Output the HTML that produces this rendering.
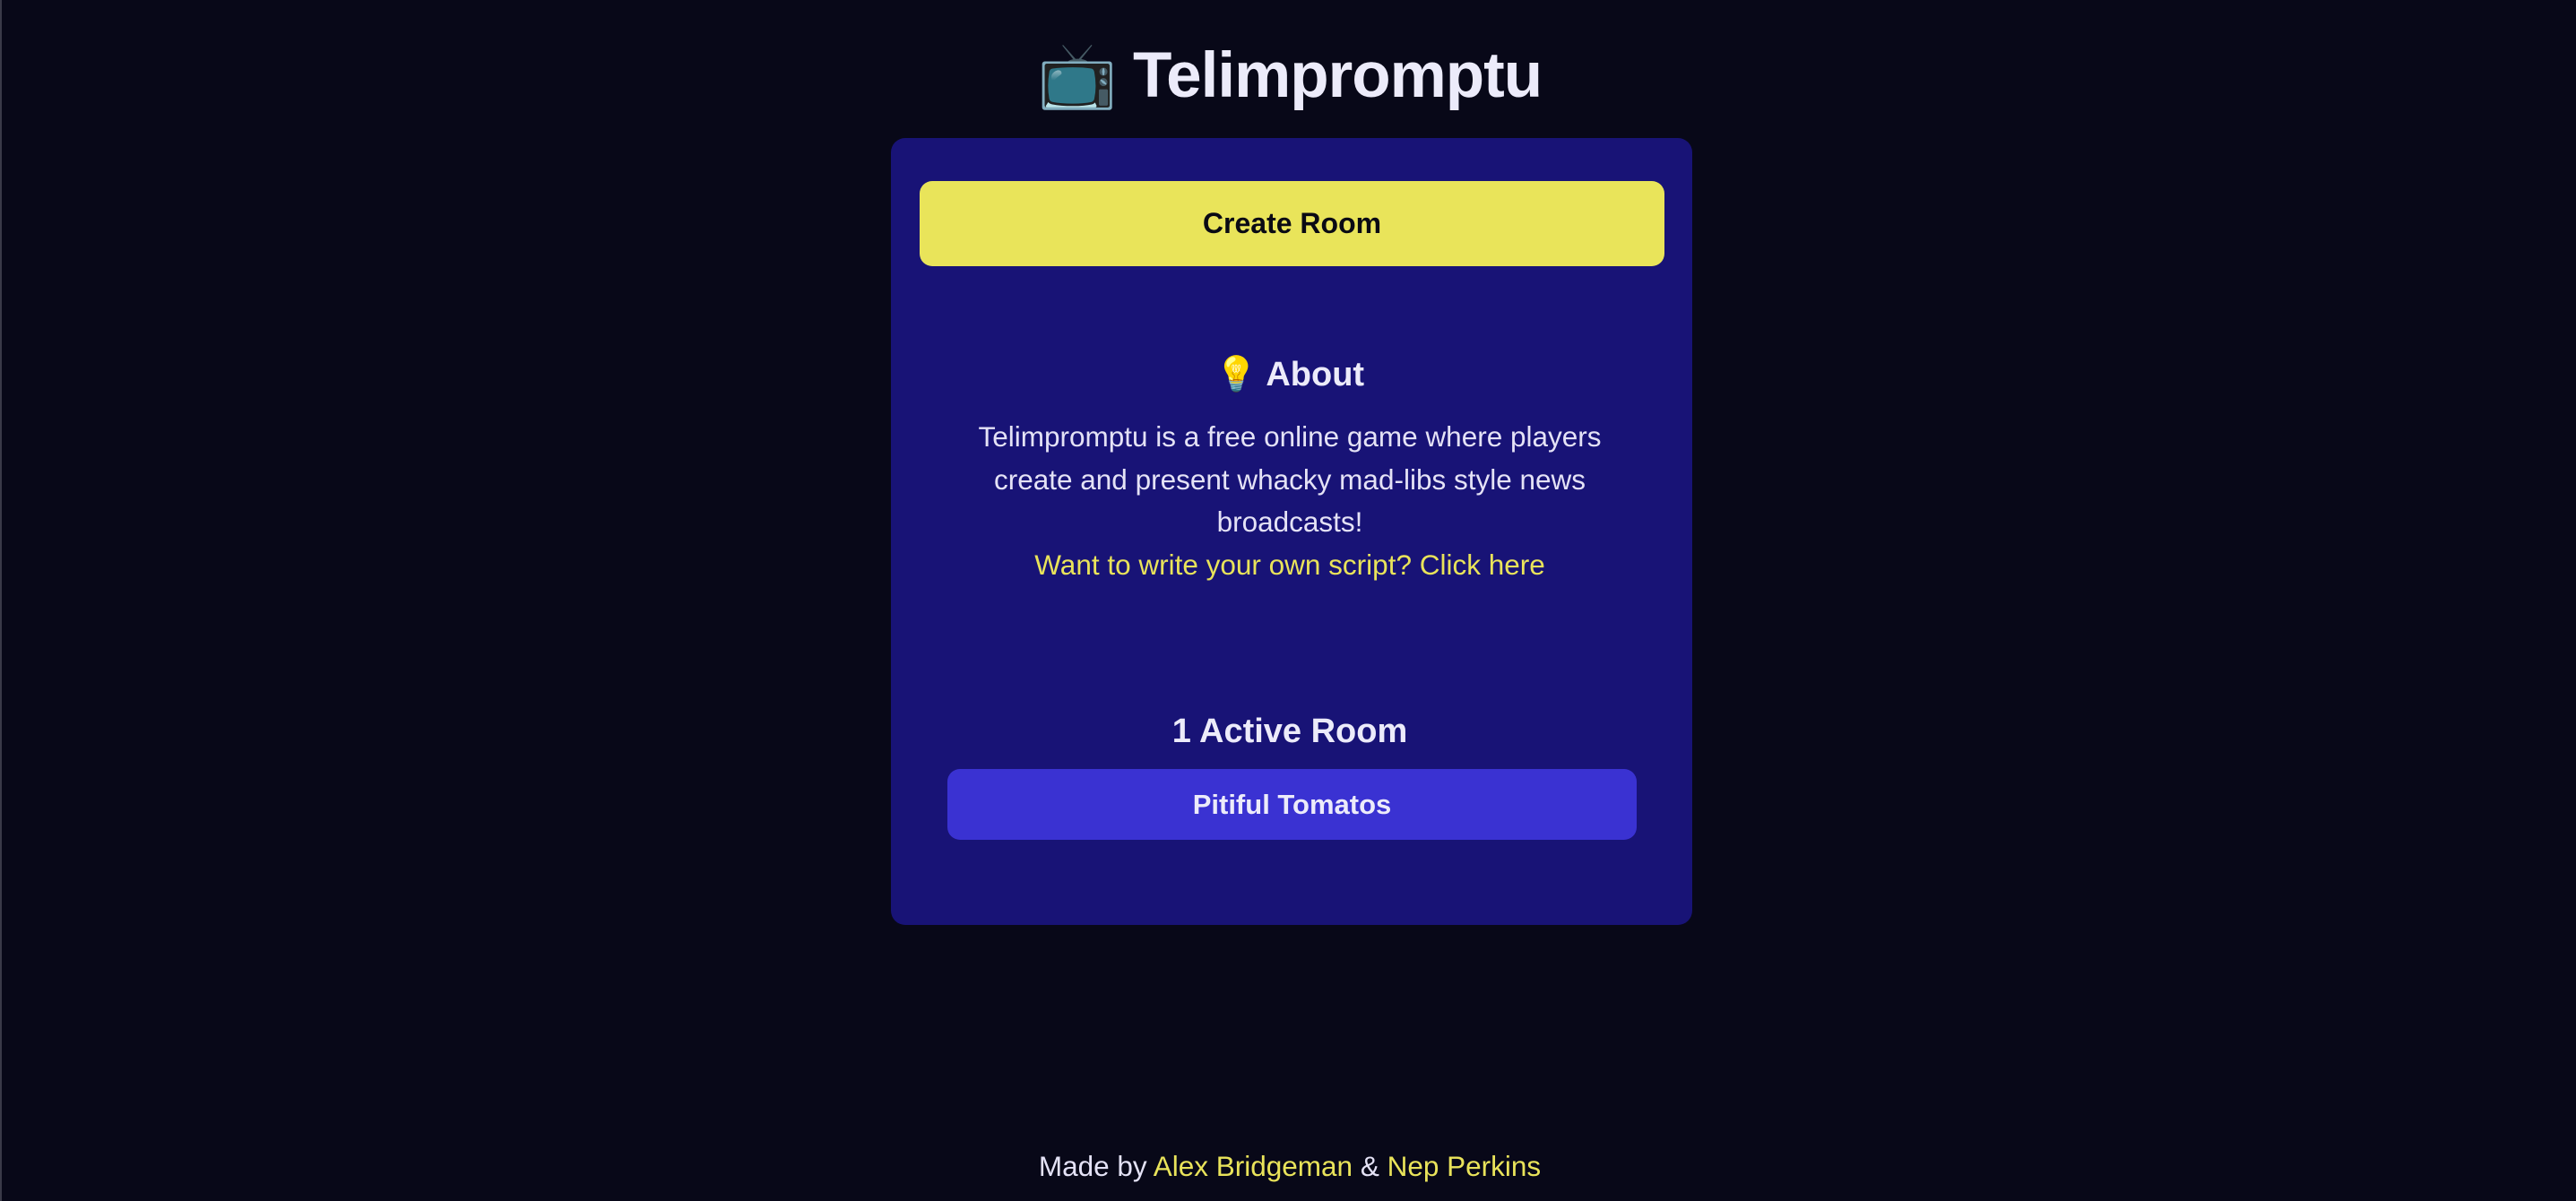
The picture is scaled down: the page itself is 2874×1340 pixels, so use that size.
<!DOCTYPE html>
<html><head><meta charset="utf-8"><style>
html,body{margin:0;padding:0;}
body{width:2874px;height:1340px;background:#080818;position:relative;overflow:hidden;font-family:"Liberation Sans",sans-serif;color:#e8e6f8;border-left:2px solid #3a3a48;box-sizing:border-box;}
.c{position:absolute;left:0;width:2874px;text-align:center;white-space:nowrap;}
h1{margin:0;font-size:71px;font-weight:700;color:#ecebfa;letter-spacing:-1px;}
.card{position:absolute;left:992px;top:154px;width:894px;height:878px;background:#181376;border-radius:16px;}
.btn{position:absolute;border-radius:14px;text-align:center;font-weight:700;}
.y{color:#e9e35a;}
</style></head><body>
<div class="c" style="top:40px;line-height:90px;"><h1><span style="font-family:'Noto Color Emoji','DejaVu Sans',sans-serif;font-weight:400;">📺</span> Telimpromptu</h1></div>
<div class="card"></div>
<div class="btn" style="left:1024px;top:202px;width:831px;height:95px;line-height:95px;background:#e9e45a;color:#0a0a14;font-size:32px;">Create Room</div>
<div class="c" style="top:392px;line-height:52px;font-size:38px;font-weight:700;color:#ecebfa;">💡 About</div>
<div class="c" style="top:464px;line-height:47.7px;font-size:31.5px;color:#e4e2f6;">Telimpromptu is a free online game where players<br>create and present whacky mad-libs style news<br>broadcasts!<br><span class="y">Want to write your own script? Click here</span></div>
<div class="c" style="top:790px;line-height:52px;font-size:38px;font-weight:700;color:#ecebfa;">1 Active Room</div>
<div class="btn" style="left:1055px;top:858px;width:769px;height:79px;line-height:79px;background:#3a32d2;color:#ecebfa;font-size:31px;">Pitiful Tomatos</div>
<div class="c" style="top:1280px;line-height:42px;font-size:31.5px;color:#e4e2f6;">Made by <span class="y">Alex Bridgeman</span> &amp; <span class="y">Nep Perkins</span></div>
</body></html>
